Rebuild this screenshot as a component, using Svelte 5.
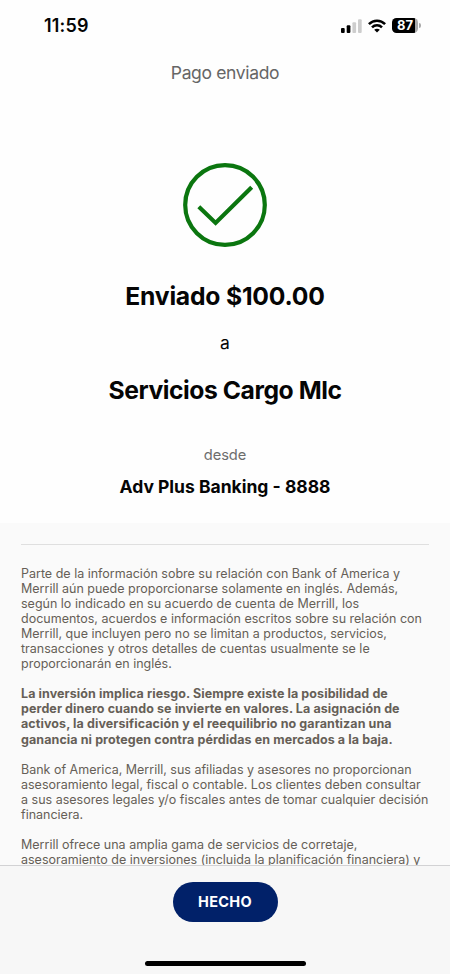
<script lang="ts">
  interface Paragraph {
    bold?: boolean;
    lines: string[];
  }

  const DISCLOSURES: Paragraph[] = [
    {
      lines: [
        "Parte de la información sobre su relación con Bank of America y",
        "Merrill aún puede proporcionarse solamente en inglés. Además,",
        "según lo indicado en su acuerdo de cuenta de Merrill, los",
        "documentos, acuerdos e información escritos sobre su relación con",
        "Merrill, que incluyen pero no se limitan a productos, servicios,",
        "transacciones y otros detalles de cuentas usualmente se le",
        "proporcionarán en inglés.",
      ],
    },
    {
      bold: true,
      lines: [
        "La inversión implica riesgo. Siempre existe la posibilidad de",
        "perder dinero cuando se invierte en valores. La asignación de",
        "activos, la diversificación y el reequilibrio no garantizan una",
        "ganancia ni protegen contra pérdidas en mercados a la baja.",
      ],
    },
    {
      lines: [
        "Bank of America, Merrill, sus afiliadas y asesores no proporcionan",
        "asesoramiento legal, fiscal o contable. Los clientes deben consultar",
        "a sus asesores legales y/o fiscales antes de tomar cualquier decisión",
        "financiera.",
      ],
    },
    {
      lines: [
        "Merrill ofrece una amplia gama de servicios de corretaje,",
        "asesoramiento de inversiones (incluida la planificación financiera) y",
      ],
    },
  ];

  let { onDone = () => {} }: { onDone?: () => void } = $props();
</script>

<div class="screen">
  <header class="status-bar">
    <span class="time">11:59</span>
    <div class="status-icons">
      <svg class="signal" width="21" height="14" viewBox="0 0 21 14">
        <rect x="0" y="9" width="3.7" height="5" rx="1" fill="#000" />
        <rect x="5.7" y="6.3" width="3.7" height="7.7" rx="1" fill="#000" />
        <rect x="11.4" y="3.3" width="3.7" height="10.7" rx="1" fill="#cdcdcd" />
        <rect x="17" y="0.3" width="3.7" height="13.7" rx="1" fill="#cdcdcd" />
      </svg>
      <svg class="wifi" width="18" height="14" viewBox="0 0 18 14">
        <g fill="none" stroke="#000" stroke-width="2.5">
          <path d="M0.9 5.1 C5.4 0.5 12.6 0.5 17.1 5.1" />
          <path d="M4 8.4 C6.8 5.6 11.2 5.6 14 8.4" />
        </g>
        <path d="M9 13.6 L6.2 10.7 C7.7 9.3 10.3 9.3 11.8 10.7 Z" fill="#000" />
      </svg>
      <div class="battery">
        <span class="battery-body">87</span>
        <span class="battery-cap"></span>
      </div>
    </div>
  </header>

  <h1 class="title">Pago enviado</h1>

  <main class="receipt">
    <svg class="check" width="84" height="84" viewBox="0 0 84 84" fill="none" stroke="#0b760f" stroke-width="4.2">
      <circle cx="42" cy="42" r="39.8" />
      <path d="M15.8 43.8 L32.6 59.9 L68.7 24.3" />
    </svg>
    <p class="amount">Enviado $100.00</p>
    <p class="to">a</p>
    <p class="payee">Servicios Cargo Mlc</p>
    <p class="from">desde</p>
    <p class="account">Adv Plus Banking - 8888</p>
  </main>

  <section class="disclosures">
    <hr />
    {#each DISCLOSURES as p}
      <p class:bold={p.bold}>
        {#each p.lines as line}
          <span class="line">{line}</span>
        {/each}
      </p>
    {/each}
  </section>

  <footer class="footer">
    <button class="done" onclick={onDone}>HECHO</button>
    <div class="home-indicator"></div>
  </footer>
</div>

<style>
  .screen {
    width: 450px; height: 974px;
    display: flex; flex-direction: column;
    overflow: hidden;
    background: #fefefe;
    color: #050505;
    font-family: Inter, "Liberation Sans", sans-serif;
  }
  p, h1 { margin: 0; }

  .status-bar {
    height: 52px; flex: none;
    display: flex; justify-content: space-between; align-items: center;
    padding: 0 30px 1px 44px;
    box-sizing: border-box;
  }
  .time { font-size: 18px; font-weight: 600; letter-spacing: 0.2px; }
  .status-icons { display: flex; align-items: center; gap: 6px; margin-right: -1px; }
  .battery { display: flex; align-items: center; gap: 1px; }
  .battery-body {
    width: 26px; height: 15px;
    border-radius: 4.5px;
    background: linear-gradient(90deg, #000 0 23px, #aaa 23px);
    color: #fff;
    font-size: 13px; font-weight: 700; line-height: 15px;
    text-align: center;
  }
  .battery-cap { width: 2px; height: 5px; border-radius: 0 2px 2px 0; background: #aaa; }

  .title {
    flex: none;
    height: 42px;
    font-size: 17.5px; font-weight: 400; line-height: 42px;
    letter-spacing: -0.35px;
    color: #666;
    text-align: center;
  }

  .receipt {
    height: 429px; flex: none;
    display: flex; flex-direction: column; align-items: center;
    padding-top: 69px;
    box-sizing: border-box;
  }
  .check { flex: none; }
  .amount, .payee { font-size: 24.7px; font-weight: 700; line-height: 30px; white-space: nowrap; }
  .amount { margin-top: 34px; letter-spacing: -0.2px; }
  .to { margin-top: 20px; font-size: 17.5px; line-height: 24px; }
  .payee { margin-top: 20px; letter-spacing: -0.45px; }
  .from { margin-top: 40px; font-size: 14.7px; line-height: 20px; letter-spacing: -0.1px; color: #6d6d6d; }
  .account { margin-top: 10px; font-size: 17.5px; font-weight: 700; line-height: 24px; }

  .disclosures {
    height: 342px; flex: none;
    overflow: hidden;
    padding: 21px 21px 0;
    box-sizing: border-box;
    background: #fafafa;
    color: #665f57;
    font-size: 12.5px; line-height: 15.05px;
  }
  .disclosures hr { height: 1px; margin: 0 0 21px; border: 0; background: #dfdfdf; }
  .disclosures p { margin-bottom: 15.05px; }
  .disclosures .bold { font-weight: 700; letter-spacing: 0.09px; }
  .line { display: block; white-space: nowrap; }

  .footer {
    flex: 1;
    display: flex; flex-direction: column; align-items: center; justify-content: space-between;
    padding: 16px 0 8px;
    border-top: 1px solid #d2d2d4;
    background: #f7f7f7;
  }
  .done {
    width: 105px; height: 40px;
    padding: 0 0 1px;
    border: 0; border-radius: 20px;
    background: #012169;
    color: #fff;
    font-family: inherit; font-size: 14.5px; font-weight: 700;
    letter-spacing: 0.3px;
    cursor: pointer;
  }
  .home-indicator { width: 161px; height: 5px; border-radius: 3px; background: #000; }
</style>
